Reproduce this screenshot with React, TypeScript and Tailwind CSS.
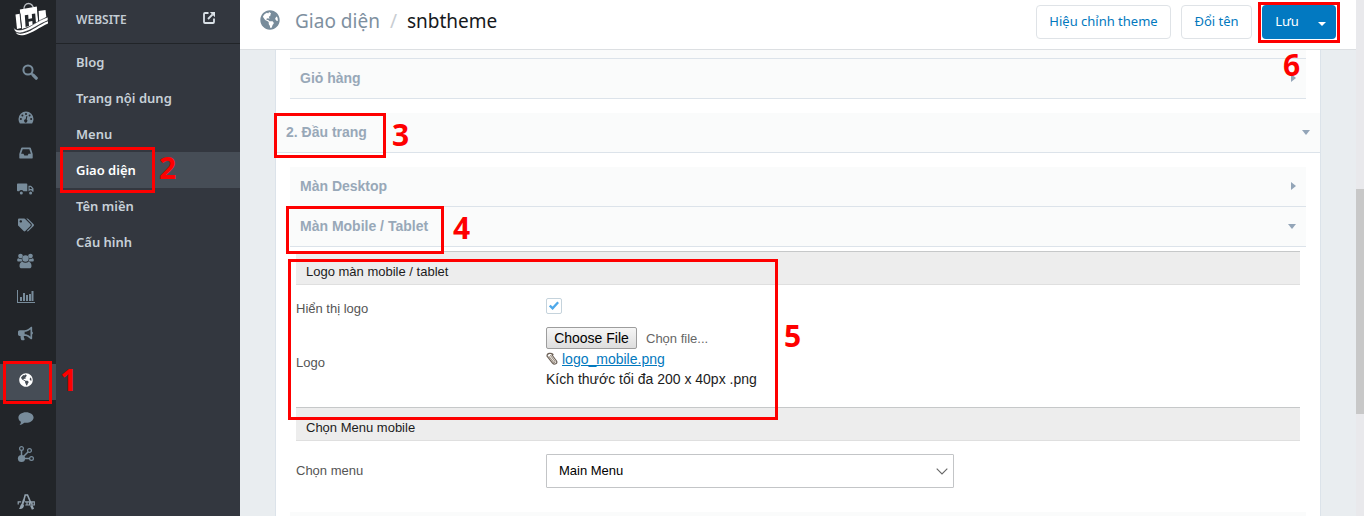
import type { ReactNode } from "react";
import { FaBullhorn, FaGlobeAmericas, FaTags } from "react-icons/fa";

function Logo() {
  return (
    <svg viewBox="0 0 36 34" className="h-[34px] w-9" fill="none" aria-hidden="true">
      <path d="M11 8C10.500 3.500 13 1.500 15.500 1.500S20 3.500 20.800 7" stroke="#b9bdc2" strokeWidth="1.300" />
      <path d="M2.500 12.500l4.500-.8L8.200 26 4 27z" fill="#fff" />
      <path d="M6.800 7.500l17-3 1.700 17L9 27z" fill="#fff" />
      <path d="M25.500 9l7-1 .8 7-7 5z" fill="#fff" />
      <path d="M7 11.500l1.500 14M24.800 8l.9 12" stroke="#23272b" strokeWidth=".9" />
      <path d="M11.800 13.200l3.400-.5.3 4.200 3.600-.6-.3-4.200 3.400-.5.8 9.600-3.400 1.300-.3-3.500-3.600.7.3 4.200-3.400 1z" fill="#23272b" />
      <path d="M.8 25.500c1.500 2.500 4.500 3 8.200 2.200C18 25.500 24 18.500 35 15v3.500C25.500 22 19 28.300 9.500 30.600 4.500 31.800 1 30 .8 25.500z" fill="#fff" stroke="#23272b" strokeWidth=".6" />
      <path d="M2.500 30.300c2.500 1.800 5.500 1.700 9 .8C20 28.500 26 22.500 35 19.200v2.300c-9 4-15 9.300-23.500 11.400-4.500 1-7.500.1-9-2.600z" fill="#fff" />
    </svg>
  );
}

function SearchIcon() {
  return (
    <svg viewBox="0 0 16 16" className="size-4" fill="none" stroke="currentColor" aria-hidden="true">
      <circle cx="6" cy="6" r="4.600" strokeWidth="2" />
      <path d="M9.500 9.500l1.500 1.500" strokeWidth="2" />
      <path d="M11.200 11.200l3 3" strokeWidth="3.200" strokeLinecap="round" />
    </svg>
  );
}

function DashboardIcon() {
  return (
    <svg viewBox="0 0 16 13" className="h-[13px] w-4" fill="currentColor" aria-hidden="true">
      <path d="M8 .5A7.500 7.500 0 0 0 .5 8c0 1.500.4 3 1.200 4.200.1.200.3.300.5.300h11.600c.2 0 .4-.1.500-.3A7.800 7.800 0 0 0 15.500 8 7.500 7.500 0 0 0 8 .5z" />
      <g fill="#222529">
        <circle cx="2.900" cy="8" r="1" />
        <circle cx="4.400" cy="4.400" r="1" />
        <circle cx="8" cy="2.900" r="1" />
        <circle cx="11.600" cy="4.400" r="1" />
        <circle cx="13.100" cy="8" r="1" />
        <path d="M8.400 5l1 .3-.7 3.300a1.600 1.600 0 1 1-1.100-.3z" />
      </g>
    </svg>
  );
}

function InboxIcon() {
  return (
    <svg viewBox="0 0 14 12" className="h-3 w-[14px]" fill="currentColor" aria-hidden="true">
      <path fillRule="evenodd" d="M3 .5h8c.4 0 .7.200.8.500L13.700 7v4c0 .3-.2.500-.5.500H.8c-.3 0-.5-.2-.5-.5V7L2.200 1c.1-.3.4-.5.8-.5zM3.700 2.300L2.100 6.800h2.400l.8 1.700h3.400l.8-1.700h2.400l-1.600-4.500z" />
    </svg>
  );
}

function TruckIcon() {
  return (
    <svg viewBox="0 0 17 12" className="h-3 w-[17px]" fill="currentColor" aria-hidden="true">
      <path d="M.8.500h8.700q.8 0 .8.800v7H6.400a2.300 2.300 0 0 0-4.200 0H.8Q0 8.300 0 7.500V1.300Q0 .5.800.5z" />
      <path fillRule="evenodd" d="M11.500 2.800h2.300q.5 0 .8.400l1.600 1.900q.3.300.3.800v2.800h-1a2 2 0 0 0-3.600-.4h-.4zM12.600 4v2h2.600l-1.600-2z" />
      <circle cx="4.300" cy="9.900" r="1.500" />
      <circle cx="13.600" cy="9.900" r="1.500" />
    </svg>
  );
}

function UsersIcon() {
  return (
    <svg viewBox="0 0 17 16" className="h-4 w-[17px]" fill="currentColor" aria-hidden="true">
      <circle cx="3.500" cy="3" r="2.300" />
      <circle cx="13.500" cy="3" r="2.300" />
      <circle cx="8.500" cy="5.500" r="3.200" />
      <path d="M1.500 5.300c1 .8 2.200.8 3.200.3 0 1.300.4 2.200 1.200 3H1.500C.6 8.600.2 8 .2 7.200c0-1 .4-1.900 1.300-1.900zM15.500 5.300c-1 .8-2.200.8-3.200.3 0 1.300-.4 2.200-1.200 3h4.400c.9 0 1.300-.6 1.300-1.400 0-1-.4-1.900-1.300-1.900z" />
      <path d="M5.300 8.700c2 1.500 4.400 1.500 6.400 0 2 .3 2.800 2 2.800 4.300 0 1.500-.8 2.300-2.200 2.300H4.700c-1.400 0-2.200-.8-2.200-2.300 0-2.300.8-4 2.800-4.300z" />
    </svg>
  );
}

function BarsIcon() {
  return (
    <svg viewBox="0 0 18 14" className="h-[14px] w-[18px]" fill="currentColor" aria-hidden="true">
      <path d="M0 0h1v12h17v1H0zM3 7h2v4H3zM6 3h2v8H6zM9 5h2v6H9zM12 4h2v7h-2zM14.500 1h2v10h-2z" />
    </svg>
  );
}

function CommentIcon() {
  return (
    <svg viewBox="0 0 16 13" className="h-[13px] w-4" fill="currentColor" aria-hidden="true">
      <path d="M8 .2c4.200 0 7.600 2.400 7.600 5.300S12.200 10.800 8 10.800q-.9 0-1.700-.1C5 12 3.300 12.700 1.600 12.800c.9-.9 1.300-1.700 1.300-3C1.300 8.800.4 7.300.4 5.500.4 2.600 3.800.2 8 .2z" />
    </svg>
  );
}

function NetworkIcon() {
  return (
    <svg viewBox="0 0 18 18" className="size-[18px]" fill="none" stroke="currentColor" strokeWidth="1.200" aria-hidden="true">
      <circle cx="4.500" cy="13.500" r="3.600" fill="currentColor" stroke="none" />
      <circle cx="4.500" cy="3.500" r="1.900" />
      <circle cx="12.500" cy="5.500" r="1.900" />
      <circle cx="14.500" cy="13.500" r="1.900" />
      <path d="M4.500 5.500v6M11 7l-5 5M12.500 13.500H7" strokeWidth="1.500" />
    </svg>
  );
}

function AppsIcon() {
  return (
    <svg viewBox="0 0 18 18" className="size-[18px] text-[#93a2ae]" fill="none" stroke="currentColor" aria-hidden="true">
      <path d="M6.500 8.500L8.200 2h2.300l3.800 9" strokeWidth="1.600" />
      <path d="M14.300 12.500l1.700 3.800" strokeWidth="2.400" />
      <path d="M7 6.500L5.500 11" strokeWidth="2" />
      <path d="M5.500 10.500c-2.300.5-1.800 3-3.500 5.500 3 .5 5-1 5-4z" fill="currentColor" stroke="none" />
      <path d="M1.200 11.500V8.800h3M7.800 8.800h9.500v3.200H8.300M10 9v3M12.500 9v3M15 9v3" strokeWidth="1.200" />
    </svg>
  );
}

function ExternalIcon() {
  return (
    <svg viewBox="0 0 12 12" className="size-3" fill="none" stroke="currentColor" strokeWidth="1.800" aria-hidden="true">
      <path d="M5.500 1H2Q1 1 1 2v8q0 1 1 1h8q1 0 1-1V6.500" />
      <path d="M5 7l4.500-4.500" />
      <path d="M6.800 0H12v5.200z" fill="currentColor" stroke="none" />
    </svg>
  );
}

function ClipIcon() {
  return (
    <svg viewBox="0 0 12 14" className="h-[14px] w-3" fill="none" strokeLinecap="round" aria-hidden="true">
      <path d="M7 2.500C5.500.800 1 .800 1 4l5.500 7c2 2.300 5.300.5 4-2L6 3" stroke="#6d6258" strokeWidth="1.200" />
      <path d="M3 4.500l4.500 5.700c1 1 2 0 1.400-1L4.500 3.500" stroke="#9c8f80" strokeWidth="1.100" />
    </svg>
  );
}

/* Red outline drawn over the element that holds it. */
function Frame({ className }: { className: string }) {
  return <span aria-hidden="true" className={`pointer-events-none absolute z-10 border-[3px] border-[#fe0000] ${className}`} />;
}

function Step({ className, children }: { className: string; children: ReactNode }) {
  return (
    <span className={`pointer-events-none absolute z-20 font-['Open_Sans','Noto_Sans',sans-serif] text-[30px] leading-8 font-bold text-[#fe0000] ${className}`}>
      {children}
    </span>
  );
}

function RailLink({ label, active, children }: { label: string; active?: boolean; children: ReactNode }) {
  return (
    <a
      href="#"
      aria-label={label}
      className={`relative flex h-9 items-center justify-center pr-[5px] ${active ? "bg-[#464d56] pb-1 text-white" : "text-[#788c9b]"}`}
    >
      {children}
      {active && (
        <>
          <Frame className="-top-[3px] right-1 -bottom-1 left-[3px]" />
          <Step className="top-0 left-[60px]">1</Step>
        </>
      )}
    </a>
  );
}

const menu = ["Blog", "Trang nội dung", "Menu", "Giao diện", "Tên miền", "Cấu hình"];

function Caret({ open }: { open?: boolean }) {
  return open ? (
    <svg viewBox="0 0 8 5" className="h-[5px] w-2 fill-[#93a5b8]" aria-hidden="true"><path d="M0 0h8L4 5z" /></svg>
  ) : (
    <svg viewBox="0 0 5 8" className="h-2 w-[5px] fill-[#93a5b8]" aria-hidden="true"><path d="M0 0v8l5-4z" /></svg>
  );
}

function Row({ title, open, children }: { title: string; open?: boolean; children?: ReactNode }) {
  return (
    <div className="relative">
      <button type="button" aria-expanded={!!open} className="flex h-10 w-full items-center justify-between border-b border-[#dce3ea] bg-[#fafbfb] px-[10px] pb-px text-left text-sm font-bold text-[#98a8b8]">
        {title}
        <Caret open={open} />
      </button>
      {children}
    </div>
  );
}

function GroupTitle({ children }: { children: ReactNode }) {
  return (
    <h3 className="flex h-[34px] items-center border-t border-b border-t-[#c6c8c9] border-b-[#dfdfdf] bg-[#ededed] px-[10px] pt-2 text-[13px] text-[#1c1c1c]">
      {children}
    </h3>
  );
}

export default function App() {
  return (
    <div className="flex h-screen overflow-hidden bg-[#e9edf0] font-['Liberation_Sans',Arial,sans-serif]">
      <nav aria-label="Main" className="relative z-10 w-14 shrink-0 bg-[#222529]">
        <a href="#" aria-label="Home" className="flex h-10 justify-center pt-[2px] pl-[6px]"><Logo /></a>
        <button type="button" aria-label="Search" className="flex h-[59px] w-full items-center justify-center pt-1 pl-1 text-[#788c9b]">
          <SearchIcon />
        </button>
        <RailLink label="Dashboard"><DashboardIcon /></RailLink>
        <RailLink label="Orders"><InboxIcon /></RailLink>
        <RailLink label="Shipping"><TruckIcon /></RailLink>
        <RailLink label="Products"><FaTags className="size-4" /></RailLink>
        <RailLink label="Customers"><UsersIcon /></RailLink>
        <RailLink label="Reports"><BarsIcon /></RailLink>
        <RailLink label="Promotions"><FaBullhorn className="size-[15px]" /></RailLink>
        <div className="mt-[13px]">
          <RailLink label="Website" active><FaGlobeAmericas className="size-[14px]" /></RailLink>
          <RailLink label="Messages"><CommentIcon /></RailLink>
          <RailLink label="Channels"><NetworkIcon /></RailLink>
        </div>
        <div className="mt-3"><RailLink label="Apps"><AppsIcon /></RailLink></div>
      </nav>

      <nav aria-label="Website" className="w-[184px] shrink-0 bg-[#33373f] font-['Noto_Sans',sans-serif]">
        <div className="flex h-11 items-center justify-between border-b border-[#212428] pr-[25px] pb-1 pl-5 text-[#c3ccd4]">
          <h2 className="text-xs font-semibold">WEBSITE</h2>
          <a href="#" aria-label="Open website" className="pb-1 text-[#dbe2e8]"><ExternalIcon /></a>
        </div>
        <ul>
          {menu.map((item) => {
            const active = item === "Giao diện";
            return (
              <li key={item} className="relative">
                <a href="#" className={`flex h-9 items-center px-5 pt-[2px] text-[13px] font-semibold ${active ? "bg-[#464d56] text-white" : "text-[#c7d0d8]"}`}>
                  {item}
                </a>
                {active && (
                  <>
                    <Frame className="-top-[5px] -bottom-[5px] left-1 w-[95px]" />
                    <Step className="top-0 left-[103px]">2</Step>
                  </>
                )}
              </li>
            );
          })}
        </ul>
      </nav>

      <main className="flex min-w-0 flex-1 flex-col">
        <header className="flex h-[50px] shrink-0 items-center border-b border-[#dcdfe2] bg-white pr-5 pb-[6px] pl-5 font-['Noto_Sans',sans-serif]">
          <FaGlobeAmericas className="mb-1 size-5 text-[#788c9b]" />
          <h1 className="ml-[15px] flex gap-[10px] text-[19px] text-[#16191c]">
            <a href="#" className="text-[#7e90a0]">Giao diện</a>
            <span className="text-[#c8cdd2]">/</span>
            snbtheme
          </h1>
          <div className="ml-auto flex gap-[10px] text-[13px] text-[#0279be]">
            <button type="button" className="h-[34px] w-[135px] rounded border border-[#dfe3e7] pt-px">Hiệu chỉnh theme</button>
            <button type="button" className="h-[34px] w-[71px] rounded border border-[#dfe3e7] pt-px">Đổi tên</button>
            <div className="relative flex h-[34px] rounded bg-[#0279c1] text-white">
              <button type="button" className="w-[50px] pt-px">Lưu</button>
              <button type="button" aria-label="More save options" className="flex w-6 items-center justify-center pt-1 pr-1">
                <svg viewBox="0 0 8 4" className="h-1 w-2 fill-white" aria-hidden="true"><path d="M0 0h8L4 4z" /></svg>
              </button>
              <Frame className="-top-[3px] -right-1 -bottom-1 -left-1" />
              <Step className="top-11 left-[21px]">6</Step>
            </div>
          </div>
        </header>

        <div className="min-h-0 flex-1 overflow-hidden px-[35px]">
          <div className="border-x border-[#dce3ea] bg-white">
            <div className="mx-[14px]">
              <div className="h-[9px] border-b border-[#dce3ea] bg-[#fafbfb]" />
              <Row title="Giỏ hàng" />
            </div>

            <div className="mt-[14px]">
              <Row title="2. Đầu trang" open>
                <Frame className="top-0 -bottom-[5px] -left-[2px] w-28" />
                <Step className="top-[6px] left-[116px]">3</Step>
              </Row>
            </div>

            <div className="mx-[14px] mt-[14px]">
              <Row title="Màn Desktop" />
              <Row title="Màn Mobile / Tablet" open>
                <Frame className="-top-px -bottom-[7px] -left-1 w-[158px]" />
                <Step className="top-[5px] left-[163px]">4</Step>
              </Row>

              <div className="mx-[6px] mt-1">
                <section className="relative h-[156px]">
                  <GroupTitle>Logo màn mobile / tablet</GroupTitle>
                  <div className="mt-[13px] flex h-5">
                    <label htmlFor="show-logo" className="w-[250px] pt-px text-[13px] leading-5 text-[#555]">Hiển thị logo</label>
                    <input
                      id="show-logo"
                      type="checkbox"
                      defaultChecked
                      className="peer size-4 appearance-none rounded-[2px] border border-[#c5d3dc] bg-white"
                    />
                    <svg viewBox="0 0 10 9" className="pointer-events-none mt-[3px] -ml-[13px] h-[9px] w-[10px] opacity-0 peer-checked:opacity-100" fill="none" stroke="#4fa9ea" strokeWidth="2.400" aria-hidden="true">
                      <path d="M.8 4.500l2.800 2.800L9.200 1.200" />
                    </svg>
                  </div>
                  <div className="mt-[9px] flex items-center">
                    <span className="w-[250px] pt-[10px] text-[13px] text-[#555]">Logo</span>
                    <div className="text-sm leading-5 text-[#1c1c1c]">
                      <div className="flex h-[22px] items-center gap-[9px]">
                        <label htmlFor="logo-file" className="flex h-[22px] w-[91px] items-center justify-center rounded-[2px] border border-[#9d9d9d] bg-linear-to-b from-[#f6f6f6] to-[#dedede] text-black">
                          Choose File
                        </label>
                        <input id="logo-file" type="file" className="sr-only" />
                        <span className="pt-px text-[13px] text-[#666]">Chọn file...</span>
                      </div>
                      <div className="flex items-center gap-1">
                        <ClipIcon />
                        <a href="#" className="text-[#0279be] underline">logo_mobile.png</a>
                      </div>
                      <p>Kích thước tối đa 200 x 40px .png</p>
                    </div>
                  </div>
                  <Frame className="top-2 -bottom-[13px] -left-2 w-[490px]" />
                  <Step className="top-[69px] left-[488px]">5</Step>
                </section>

                <section>
                  <GroupTitle>Chọn Menu mobile</GroupTitle>
                  <div className="mt-[13px] flex items-center">
                    <label htmlFor="menu" className="w-[250px] text-[13px] text-[#555]">Chọn menu</label>
                    <div className="relative">
                      <select id="menu" className="h-[34px] w-[408px] appearance-none rounded-[1px] border border-[#c3c5c7] bg-white px-3 text-[13px] text-black">
                        <option>Main Menu</option>
                      </select>
                      <svg viewBox="0 0 12 7" className="pointer-events-none absolute top-[14px] right-[6px] h-[7px] w-3" fill="none" stroke="#666" strokeWidth="1.100" aria-hidden="true">
                        <path d="M.7.700L6 6 11.300.7" />
                      </svg>
                    </div>
                  </div>
                </section>
              </div>

              <div className="mt-6 h-10 border-b border-[#dce3ea] bg-[#fafbfb]" />
            </div>
          </div>
        </div>
      </main>

      <div aria-hidden="true" className="w-2 shrink-0 bg-[#e9e9ec] pt-[189px]">
        <div className="h-[225px] bg-[#c8c8c8]" />
      </div>
    </div>
  );
}
